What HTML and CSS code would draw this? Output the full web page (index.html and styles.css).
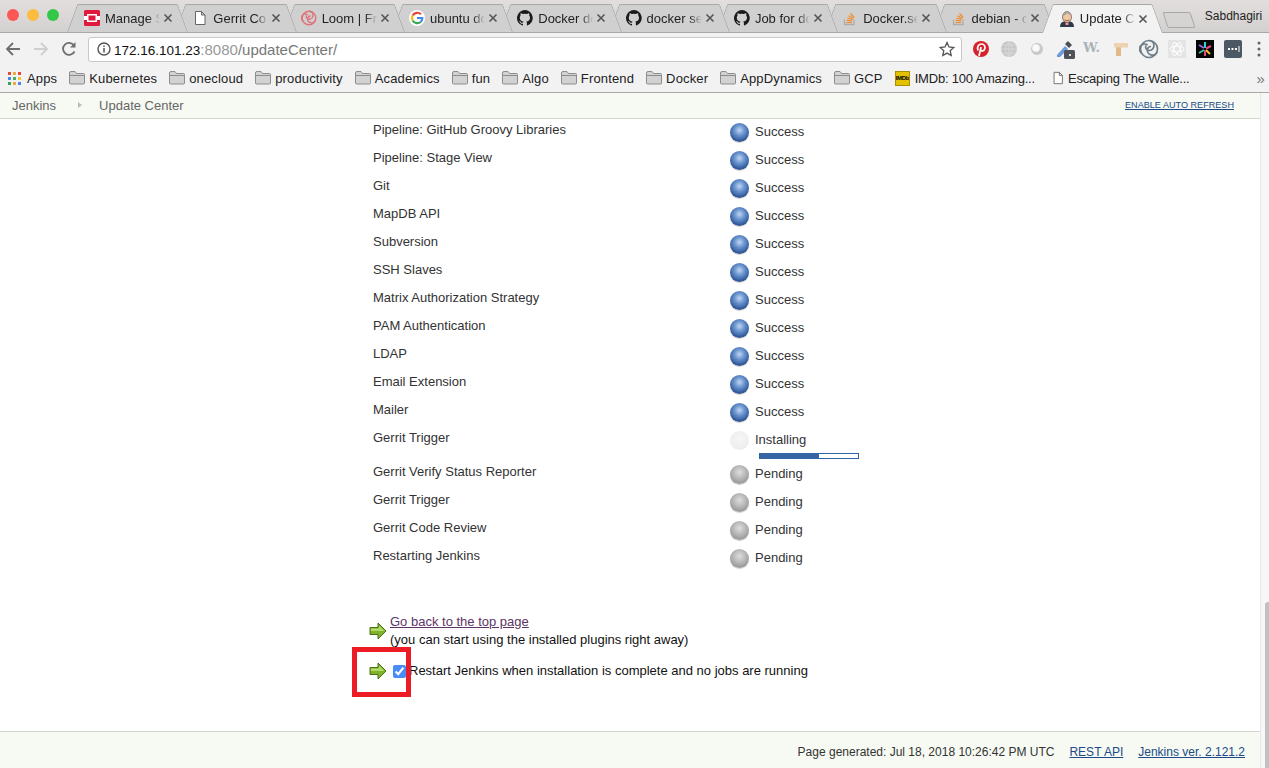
FILE: index.html
```html
<!DOCTYPE html>
<html lang="en">
<head>
  <meta charset="UTF-8">
  <title>Update Center [Jenkins]</title>
  <link rel="stylesheet" href="styles.css">
</head>
<body>
  <svg class="sprites" width="0" height="0">
    <symbol id="i-x" viewBox="0 0 10 10"><path d="M1.5 1.5l7 7M8.5 1.5l-7 7" fill="none" stroke="#555" stroke-width="1.6"/></symbol>
    <symbol id="i-doc" viewBox="0 0 16 16"><path d="M3.5 1.5h6l3.5 3.5v9.500h-9.500zM9.500 1.500v3.500h3.500" fill="#fff" stroke="#666"/></symbol>
    <symbol id="i-folder" viewBox="0 0 16 14"><path d="M.5 2q0-1.500 1.500-1.500h4l1.500 2h7q1 0 1 1v8.500q0 1-1 1h-13q-1 0-1-1z" fill="#d2d2d2" stroke="#8d8d8d"/><path d="M1 4.500h14" stroke="#8d8d8d"/></symbol>
    <symbol id="i-gh" viewBox="0 0 16 16"><path d="M8 0a8 8 0 0 0-2.500 15.600c.4.100.5-.2.500-.4v-1.400c-2.200.5-2.700-1-2.700-1-.4-.9-.9-1.200-.9-1.200-.7-.5.100-.5.100-.5.8.100 1.200.8 1.200.8.700 1.200 1.900.9 2.300.7.100-.5.300-.9.500-1.100-1.800-.2-3.700-.9-3.700-4 0-.9.300-1.600.8-2.100-.1-.2-.4-1 .1-2.100 0 0 .7-.2 2.200.8a7.600 7.600 0 0 1 4 0c1.500-1 2.200-.8 2.200-.8.400 1.100.2 1.900.1 2.100.5.6.8 1.300.8 2.100 0 3.100-1.900 3.700-3.700 3.900.3.300.6.800.6 1.500v2.200c0 .2.100.5.600.4A8 8 0 0 0 8 0z" fill="#1b1b1b"/></symbol>
    <symbol id="i-so" viewBox="0 0 16 16"><path d="M2.500 9.500v5h9.500v-5" fill="none" stroke="#b0aba4" stroke-width="1.300"/><path d="M4.500 12.500h5.500M4.700 10.300l5.400.6M5.300 8l5.200 1.500M6.500 5.700l4.700 2.700M8.500 3.500l3.700 4" fill="none" stroke="#f08a2c" stroke-width="1.200"/></symbol>
    <symbol id="i-spiral" viewBox="0 0 20 20"><g fill="none" stroke="currentColor" stroke-width="1.700"><circle cx="10" cy="10" r="8.500"/><path d="M10 1.500a5 5 0 0 1 0 10 3.500 3.500 0 0 1-3-5M18 13a5 5 0 0 1-9.500-3 3.500 3.500 0 0 1 3.500-2.500M2.500 14a5 5 0 0 1 6-8"/></g></symbol>
  </svg>

  <div class="tabstrip">
    <div class="lights"><i class="light red"></i><i class="light yellow"></i><i class="light green"></i></div>
    <div class="tabs">
      <div class="tab">
        <svg class="fav" viewBox="0 0 16 16"><rect width="16" height="16" rx="1.500" fill="#e0193f"/><path d="M0 6h3V4h10v2h3v4h-3v2H3v-2H0z" fill="#fff"/><rect x="4.500" y="5.500" width="7" height="5" fill="#e0193f"/></svg>
        <span class="tab-title">Manage S</span><svg class="tab-x"><use href="#i-x"/></svg>
      </div>
      <div class="tab">
        <svg class="fav"><use href="#i-doc"/></svg>
        <span class="tab-title">Gerrit Co</span><svg class="tab-x"><use href="#i-x"/></svg>
      </div>
      <div class="tab">
        <svg class="fav loom"><use href="#i-spiral"/></svg>
        <span class="tab-title">Loom | Fr</span><svg class="tab-x"><use href="#i-x"/></svg>
      </div>
      <div class="tab">
        <svg class="fav" viewBox="0 0 16 16"><circle cx="8" cy="8" r="8" fill="#fff"/><g fill="none" stroke-width="2.200"><path d="M12 4.300A5.300 5.300 0 0 0 3.600 5.500" stroke="#ea4335"/><path d="M3.600 5.500a5.300 5.300 0 0 0 0 5" stroke="#fbbc05"/><path d="M3.600 10.500a5.300 5.300 0 0 0 8.300 1.200" stroke="#34a853"/><path d="M11.900 11.700A5.300 5.300 0 0 0 13.300 8H8" stroke="#4285f4"/></g></svg>
        <span class="tab-title">ubuntu do</span><svg class="tab-x"><use href="#i-x"/></svg>
      </div>
      <div class="tab">
        <svg class="fav"><use href="#i-gh"/></svg>
        <span class="tab-title">Docker de</span><svg class="tab-x"><use href="#i-x"/></svg>
      </div>
      <div class="tab">
        <svg class="fav"><use href="#i-gh"/></svg>
        <span class="tab-title">docker se</span><svg class="tab-x"><use href="#i-x"/></svg>
      </div>
      <div class="tab">
        <svg class="fav"><use href="#i-gh"/></svg>
        <span class="tab-title">Job for do</span><svg class="tab-x"><use href="#i-x"/></svg>
      </div>
      <div class="tab">
        <svg class="fav"><use href="#i-so"/></svg>
        <span class="tab-title">Docker.se</span><svg class="tab-x"><use href="#i-x"/></svg>
      </div>
      <div class="tab">
        <svg class="fav"><use href="#i-so"/></svg>
        <span class="tab-title">debian - c</span><svg class="tab-x"><use href="#i-x"/></svg>
      </div>
      <div class="tab active">
        <svg class="fav" viewBox="0 0 16 16"><path d="M1 16q0-5 4-5.500h6q4 .5 4 5.500z" fill="#2c3a4d"/><path d="M6.500 11l1.500 1.500 1.500-1.500v3h-3z" fill="#fff"/><path d="M6 12l2 1 2-1v2l-2-.7-2 .7z" fill="#c62a2a"/><ellipse cx="8" cy="6" rx="4.500" ry="5.500" fill="#eec9a5" stroke="#6b4a35" stroke-width=".7"/><path d="M4 5q0-4.500 4-5 4 .5 4 4-3-.5-4-2-1 2-4 3z" fill="#a5a29c"/><path d="M5.500 9q2.500 1.500 5 0" fill="none" stroke="#7a4a35" stroke-width=".8"/></svg>
        <span class="tab-title">Update Ce</span><svg class="tab-x"><use href="#i-x"/></svg>
      </div>
    </div>
    <div class="newtab"></div>
    <div class="profile">Sabdhagiri</div>
  </div>

  <div class="toolbar">
    <svg class="nav-btn" viewBox="0 0 16 16"><path d="M15 8H2M8 2L2 8l6 6" fill="none" stroke="#6e6e6e" stroke-width="1.800"/></svg>
    <svg class="nav-btn" viewBox="0 0 16 16"><path d="M1 8h13M8 2l6 6-6 6" fill="none" stroke="#cfcfcf" stroke-width="1.800"/></svg>
    <svg class="nav-btn" viewBox="0 0 16 16"><path d="M13.500 10.500A6 6 0 1 1 13 4.500" fill="none" stroke="#6e6e6e" stroke-width="1.800"/><path d="M14.500 1v5.500H9z" fill="#6e6e6e"/></svg>
    <div class="omnibox">
      <svg class="info" viewBox="0 0 14 14"><circle cx="7" cy="7" r="6" fill="none" stroke="#555" stroke-width="1.400"/><path d="M7 6v4.500M7 3.500v1.500" stroke="#555" stroke-width="1.500"/></svg>
      <span class="url"><b>172.16.101.23</b><span class="port">:8080</span><span class="path">/updateCenter/</span></span>
      <svg class="star" viewBox="0 0 16 16"><path d="M8 1.500l2 4.500 4.800.5-3.600 3.200 1 4.800L8 12.100l-4.200 2.400 1-4.800L1.200 6.500 6 6z" fill="none" stroke="#555" stroke-width="1.300"/></svg>
    </div>
    <div class="extensions">
      <svg class="ext" viewBox="0 0 20 20"><circle cx="10" cy="10" r="8" fill="#d4232b"/><path d="M7 11.500C5.500 7.500 8 5 10.500 5c3 0 4 2.500 3.200 5-.7 2.200-3.200 2.500-4 1M10 8l-2 9" fill="none" stroke="#fff" stroke-width="1.700"/></svg>
      <svg class="ext" viewBox="0 0 20 20"><circle cx="10" cy="10" r="8" fill="#c6c6c6"/><path d="M2 10h16M3 6h14M3 14h14M10 2v16M10 2q-7 8 0 16M10 2q7 8 0 16" fill="none" stroke="#dedede" stroke-width=".7"/></svg>
      <svg class="ext" viewBox="0 0 20 20"><circle cx="10" cy="10" r="6" fill="#c9c9c9"/><circle cx="9" cy="9" r="3.800" fill="#fafafa"/></svg>
      <svg class="ext" viewBox="0 0 20 20"><path d="M2 16L10 7l3 3-8 8H2z" fill="#6d9bd8"/><path d="M10 5l3-3 4 4-3 3z" fill="#4b4f55"/><rect x="9" y="11" width="11" height="9" rx="1.500" fill="#4e5259"/><rect x="14" y="15" width="2" height="2" fill="#ddd"/></svg>
      <span class="ext ext-w">W.</span>
      <svg class="ext" viewBox="0 0 20 20"><path d="M3 4h14v4.500H10V17H5V8.500H3z" fill="#eed3b0"/><path d="M5 8.500h5V17H5z" fill="#e0b98a"/></svg>
      <svg class="ext spiral"><use href="#i-spiral"/></svg>
      <svg class="ext" viewBox="0 0 20 20"><rect x="1" y="1" width="18" height="18" fill="#e4e4e4"/><g fill="none" stroke="#fff"><ellipse cx="10" cy="10" rx="7" ry="3"/><ellipse cx="10" cy="10" rx="7" ry="3" transform="rotate(60 10 10)"/><ellipse cx="10" cy="10" rx="7" ry="3" transform="rotate(120 10 10)"/></g></svg>
      <svg class="ext" viewBox="0 0 20 20"><rect x="1" y="1" width="18" height="18" fill="#050505"/><g stroke-width="2"><path d="M10 3v6" stroke="#2fd0e0"/><path d="M16 7l-5 2.500" stroke="#e8467c"/><path d="M15 15l-4-4" stroke="#f4c430"/><path d="M10 17v-6" stroke="#e8467c"/><path d="M4 14l5-3" stroke="#39c5a5"/><path d="M4 6l5 3" stroke="#9a6ae0"/></g></svg>
      <svg class="ext" viewBox="0 0 20 20"><rect x="1" y="1" width="18" height="18" rx="2" fill="#4c5964"/><path d="M5 9h2v2H5zM8.500 9h2v2h-2zM12 9h2v2h-2zM15.500 7h1v6h-1z" fill="#fff"/></svg>
      <svg class="menu-dots" viewBox="0 0 4 16"><path d="M2 2v.1M2 8v.1M2 14v.1" stroke="#666" stroke-width="3" stroke-linecap="round"/></svg>
    </div>
  </div>

  <div class="bookmarks">
    <div class="bm"><svg class="bm-apps" viewBox="0 0 13 13"><path d="M0 0h3v3H0z" fill="#e04b3c"/><path d="M5 0h3v3H5z" fill="#f2a93b"/><path d="M10 0h3v3h-3z" fill="#e04b3c"/><path d="M0 5h3v3H0z" fill="#4a87ee"/><path d="M5 5h3v3H5z" fill="#4caf50"/><path d="M10 5h3v3h-3z" fill="#f2c431"/><path d="M0 10h3v3H0z" fill="#34a853"/><path d="M5 10h3v3H5z" fill="#f2a93b"/><path d="M10 10h3v3h-3z" fill="#4a87ee"/></svg>Apps</div>
    <div class="bm"><svg class="bm-icon"><use href="#i-folder"/></svg>Kubernetes</div>
    <div class="bm"><svg class="bm-icon"><use href="#i-folder"/></svg>onecloud</div>
    <div class="bm"><svg class="bm-icon"><use href="#i-folder"/></svg>productivity</div>
    <div class="bm"><svg class="bm-icon"><use href="#i-folder"/></svg>Academics</div>
    <div class="bm"><svg class="bm-icon"><use href="#i-folder"/></svg>fun</div>
    <div class="bm"><svg class="bm-icon"><use href="#i-folder"/></svg>Algo</div>
    <div class="bm"><svg class="bm-icon"><use href="#i-folder"/></svg>Frontend</div>
    <div class="bm"><svg class="bm-icon"><use href="#i-folder"/></svg>Docker</div>
    <div class="bm"><svg class="bm-icon"><use href="#i-folder"/></svg>AppDynamics</div>
    <div class="bm"><svg class="bm-icon"><use href="#i-folder"/></svg>GCP</div>
    <div class="bm bm-imdb"><span class="imdb">IMDb</span>IMDb: 100 Amazing...</div>
    <div class="bm bm-page"><svg class="bm-doc"><use href="#i-doc"/></svg>Escaping The Walle...</div>
    <div class="bm-more">»</div>
  </div>

  <div class="window">
    <div class="page">
      <div class="breadcrumbs">
        <a class="crumb">Jenkins</a>
        <span class="crumb-arrow"></span>
        <a class="crumb">Update Center</a>
        <a class="refresh">ENABLE AUTO REFRESH</a>
      </div>

      <div class="main">
        <div class="jobs">
          <div class="job"><div class="job-name">Pipeline: GitHub Groovy Libraries</div><div class="job-status"><i class="ball blue"></i>Success</div></div>
          <div class="job"><div class="job-name">Pipeline: Stage View</div><div class="job-status"><i class="ball blue"></i>Success</div></div>
          <div class="job"><div class="job-name">Git</div><div class="job-status"><i class="ball blue"></i>Success</div></div>
          <div class="job"><div class="job-name">MapDB API</div><div class="job-status"><i class="ball blue"></i>Success</div></div>
          <div class="job"><div class="job-name">Subversion</div><div class="job-status"><i class="ball blue"></i>Success</div></div>
          <div class="job"><div class="job-name">SSH Slaves</div><div class="job-status"><i class="ball blue"></i>Success</div></div>
          <div class="job"><div class="job-name">Matrix Authorization Strategy</div><div class="job-status"><i class="ball blue"></i>Success</div></div>
          <div class="job"><div class="job-name">PAM Authentication</div><div class="job-status"><i class="ball blue"></i>Success</div></div>
          <div class="job"><div class="job-name">LDAP</div><div class="job-status"><i class="ball blue"></i>Success</div></div>
          <div class="job"><div class="job-name">Email Extension</div><div class="job-status"><i class="ball blue"></i>Success</div></div>
          <div class="job"><div class="job-name">Mailer</div><div class="job-status"><i class="ball blue"></i>Success</div></div>
          <div class="job job-running">
            <div class="job-name">Gerrit Trigger</div>
            <div>
              <div class="job-status"><i class="ball faded"></i>Installing</div>
              <div class="progress"><div class="progress-fill" style="width: 60%"></div></div>
            </div>
          </div>
          <div class="job"><div class="job-name">Gerrit Verify Status Reporter</div><div class="job-status"><i class="ball grey"></i>Pending</div></div>
          <div class="job"><div class="job-name">Gerrit Trigger</div><div class="job-status"><i class="ball grey"></i>Pending</div></div>
          <div class="job"><div class="job-name">Gerrit Code Review</div><div class="job-status"><i class="ball grey"></i>Pending</div></div>
          <div class="job"><div class="job-name">Restarting Jenkins</div><div class="job-status"><i class="ball grey"></i>Pending</div></div>
        </div>

        <div class="next-step">
          <svg class="go-arrow" viewBox="0 0 18 18"><path d="M1 5.500h8V1l8 8-8 8v-4.500H1z" fill="#7fb32a" stroke="#4a7012"/><path d="M2 6.500h8V3.500L15 9H2z" fill="#b3d96a"/></svg>
          <div><a class="top-link">Go back to the top page</a><br>(you can start using the installed plugins right away)</div>
        </div>
        <div class="next-step restart">
          <svg class="go-arrow" viewBox="0 0 18 18"><path d="M1 5.500h8V1l8 8-8 8v-4.500H1z" fill="#7fb32a" stroke="#4a7012"/><path d="M2 6.500h8V3.500L15 9H2z" fill="#b3d96a"/></svg>
          <label class="restart-label"><input class="restart-check" type="checkbox" checked>Restart Jenkins when installation is complete and no jobs are running</label>
          <div class="highlight"></div>
        </div>
      </div>

      <div class="footer">
        <span>Page generated: Jul 18, 2018 10:26:42 PM UTC</span>
        <a>REST API</a>
        <a>Jenkins ver. 2.121.2</a>
      </div>
    </div>
    <div class="scrollbar"><div class="scroll-thumb"></div></div>
  </div>
</body>
</html>
```

FILE: styles.css
```css
* {
  box-sizing: border-box;
}
html, body {
  height: 100%;
}
body {
  margin: 0;
  height: 768px;
  overflow: hidden;
  display: flex;
  flex-direction: column;
  font-family: "Liberation Sans", Arial, sans-serif;
  font-size: 13px;
  color: #333;
  background: #fff;
}
.sprites {
  display: block;
  flex: none;
}

/* browser chrome */
.tabstrip {
  flex: none;
  height: 33px;
  display: flex;
  align-items: flex-end;
  background: linear-gradient(#e2dedd, #d3d1d0);
  border-bottom: 1px solid #a8a8a8;
}
.lights {
  display: flex;
  gap: 8px;
  padding: 0 8px 0 7px;
  align-self: flex-start;
  margin-top: 9px;
}
.light {
  width: 12px;
  height: 12px;
  border-radius: 50%;
}
.red { background: #fc5753; }
.yellow { background: #fdbc40; }
.green { background: #33c748; }
.tabs {
  display: flex;
  align-items: flex-end;
}
.tab {
  position: relative;
  width: 121px;
  height: 28px;
  margin-right: -12.7px;
  padding: 0 15px 0 17px;
  display: flex;
  align-items: center;
  color: #222;
}
.tab:nth-child(1) { z-index: 10; }
.tab:nth-child(2) { z-index: 9; }
.tab:nth-child(3) { z-index: 8; }
.tab:nth-child(4) { z-index: 7; }
.tab:nth-child(5) { z-index: 6; }
.tab:nth-child(6) { z-index: 5; }
.tab:nth-child(7) { z-index: 4; }
.tab:nth-child(8) { z-index: 3; }
.tab:nth-child(9) { z-index: 2; }
.tab::before, .tab::after {
  content: "";
  position: absolute;
  top: 0;
  bottom: 0;
  width: 60%;
  z-index: -1;
  background: #d0d0d0;
  border-top: 1px solid #a8a8a8;
}
.tab::before {
  left: 0;
  border-left: 1px solid #a8a8a8;
  border-top-left-radius: 2px;
  transform: skewX(-20deg);
  transform-origin: bottom left;
}
.tab::after {
  right: 0;
  border-right: 1px solid #a8a8a8;
  border-top-right-radius: 2px;
  transform: skewX(20deg);
  transform-origin: bottom right;
}
.tab.active {
  z-index: 20;
  height: 29px;
  margin-right: 0;
  margin-bottom: -1px;
}
.tab.active::before, .tab.active::after {
  background: #f2f2f2;
}
.fav {
  flex: none;
  width: 16px;
  height: 16px;
  margin-right: 5px;
}
.loom {
  color: #e0737a;
}
.tab-title {
  flex: 1;
  overflow: hidden;
  white-space: nowrap;
  -webkit-mask-image: linear-gradient(to right, #000 78%, transparent 100%);
  mask-image: linear-gradient(to right, #000 78%, transparent 100%);
}
.tab-x {
  flex: none;
  width: 10px;
  height: 10px;
  margin-left: 3px;
}
.newtab {
  flex: none;
  width: 28px;
  height: 16px;
  margin: 0 0 4px 2px;
  background: #d6d4d3;
  border: 1px solid #a8a8a8;
  border-radius: 2px;
  transform: skewX(18deg);
}
.profile {
  align-self: flex-start;
  margin: 9px 0 0 12px;
  font-size: 12px;
  color: #222;
}

.toolbar {
  flex: none;
  height: 32px;
  display: flex;
  align-items: center;
  gap: 12px;
  padding-left: 5px;
  background: #f2f2f2;
}
.nav-btn {
  flex: none;
  width: 16px;
  height: 16px;
}
.omnibox {
  flex: none;
  width: 874px;
  height: 25px;
  margin-left: -1px;
  display: flex;
  align-items: center;
  padding: 0 6px 0 8px;
  background: #fff;
  border: 1px solid #c9c9c9;
  border-radius: 3px;
}
.info {
  width: 14px;
  height: 14px;
  margin-right: 3px;
}
.url {
  flex: 1;
  font-size: 15px;
}
.url b {
  font-size: 13.5px;
  font-weight: normal;
  color: #111;
}
.port { color: #999; }
.path { color: #777; }
.star {
  width: 16px;
  height: 16px;
}
.extensions {
  display: flex;
  align-items: center;
  gap: 8px;
  margin-left: -3px;
}
.ext {
  flex: none;
  width: 20px;
  height: 20px;
}
.ext-w {
  font-family: "DejaVu Serif", serif;
  font-weight: bold;
  font-size: 13px;
  line-height: 18px;
  white-space: nowrap;
  color: #a9b3ba;
}
.spiral {
  color: #6f7f88;
}
.menu-dots {
  width: 4px;
  height: 16px;
  margin-left: 6px;
}

.bookmarks {
  flex: none;
  height: 28px;
  display: flex;
  align-items: center;
  gap: 12px;
  padding: 0 0 1px 8px;
  background: #f2f2f2;
  border-bottom: 1px solid #a8a8a8;
  color: #222;
  letter-spacing: .15px;
  white-space: nowrap;
}
.bm {
  display: flex;
  align-items: center;
}
.bm-apps {
  width: 13px;
  height: 13px;
  margin-right: 6px;
}
.bm-icon {
  width: 16px;
  height: 14px;
  margin-right: 4px;
}
.bm-doc {
  width: 14px;
  height: 16px;
  margin-right: 3px;
}
.bm-imdb, .bm-page {
  letter-spacing: -.2px;
}
.bm-page {
  margin-left: 4px;
}
.imdb {
  width: 15px;
  height: 15px;
  margin-right: 5px;
  overflow: hidden;
  background: #e3c000;
  border: 1px solid #a98f00;
  color: #000;
  font-size: 6px;
  font-weight: bold;
  line-height: 13px;
  letter-spacing: -.3px;
  text-align: center;
}
.bm-more {
  margin-left: auto;
  padding-right: 4px;
  font-size: 15px;
  color: #777;
}

/* jenkins page */
.window {
  flex: 1;
  min-height: 0;
  display: flex;
}
.page {
  flex: 1;
  min-width: 0;
  display: flex;
  flex-direction: column;
}
.breadcrumbs {
  flex: none;
  height: 26px;
  display: flex;
  align-items: center;
  padding: 0 26px 1px 12px;
  background: #f6faf2;
  border-bottom: 1px solid #d3d7cf;
  color: #666;
}
.crumb-arrow {
  width: 0;
  height: 0;
  margin: 0 17px 0 22px;
  border-left: 4px solid #bbb;
  border-top: 3px solid transparent;
  border-bottom: 3px solid transparent;
}
.refresh {
  margin-left: auto;
  font-size: 9.1px;
  color: #204a87;
  text-decoration: underline;
}
.main {
  flex: 1;
  min-height: 0;
  overflow: hidden;
}
.jobs {
  margin-left: 373px;
}
.job {
  height: 28px;
  padding-top: 3px;
  display: grid;
  grid-template-columns: 357px 1fr;
}
.job-running {
  height: 34px;
}
.job-name {
  line-height: 16px;
}
.job-status {
  display: flex;
  align-items: center;
  height: 20px;
  padding-bottom: 2px;
}
.ball {
  flex: none;
  width: 19px;
  height: 19px;
  margin: 2px 6px 0 0;
  border-radius: 50%;
  box-shadow: 0 1px 1px rgba(0, 0, 0, .2);
}
.blue {
  background: radial-gradient(circle at 50% 38%, #c4d6ee 0, #6c98d2 32%, #2e5596 72%, #1f3d70 100%);
}
.grey {
  background: radial-gradient(circle at 50% 38%, #dedede 0, #b2b2b2 48%, #7e7e7e 100%);
}
.faded {
  background: radial-gradient(circle at 50% 40%, #f6f6f6 0, #efefef 60%, #e6e6e6 100%);
  box-shadow: none;
}
.progress {
  width: 100px;
  height: 6px;
  margin: 3px 0 0 29px;
  background: #fff;
  border: 1px solid #3465a4;
}
.progress-fill {
  height: 100%;
  background: #3465a4;
}
.next-step {
  margin: 40px 0 0 369px;
  display: flex;
  align-items: center;
  line-height: 18px;
  color: #111;
}
.go-arrow {
  flex: none;
  width: 18px;
  height: 18px;
  margin-right: 3px;
}
.top-link {
  color: #5c3566;
  text-decoration: underline;
}
.restart {
  position: relative;
  margin-top: 13px;
}
.restart-label {
  display: flex;
  align-items: center;
}
.restart-check {
  width: 13px;
  height: 13px;
  margin: 0 3px 0 3px;
  accent-color: #4a8cf7;
}
.highlight {
  position: absolute;
  left: -17px;
  top: -15px;
  width: 59px;
  height: 50px;
  border: 5px solid #ec1c24;
}
.footer {
  flex: none;
  height: 37px;
  display: flex;
  align-items: center;
  justify-content: flex-end;
  gap: 15px;
  padding: 3px 15px 0 0;
  background: #f6faf2;
  border-top: 1px solid #d3d7cf;
  font-size: 12px;
  color: #333;
}
.footer a {
  color: #204a87;
  text-decoration: underline;
}
.scrollbar {
  flex: none;
  width: 9px;
  padding: 509px 0 0 4px;
  background: #f7f7f7;
  border-left: 1px solid #e6e6e6;
}
.scroll-thumb {
  height: 100%;
  background: #c1c1c1;
  border-radius: 3px 0 0 0;
}
```
